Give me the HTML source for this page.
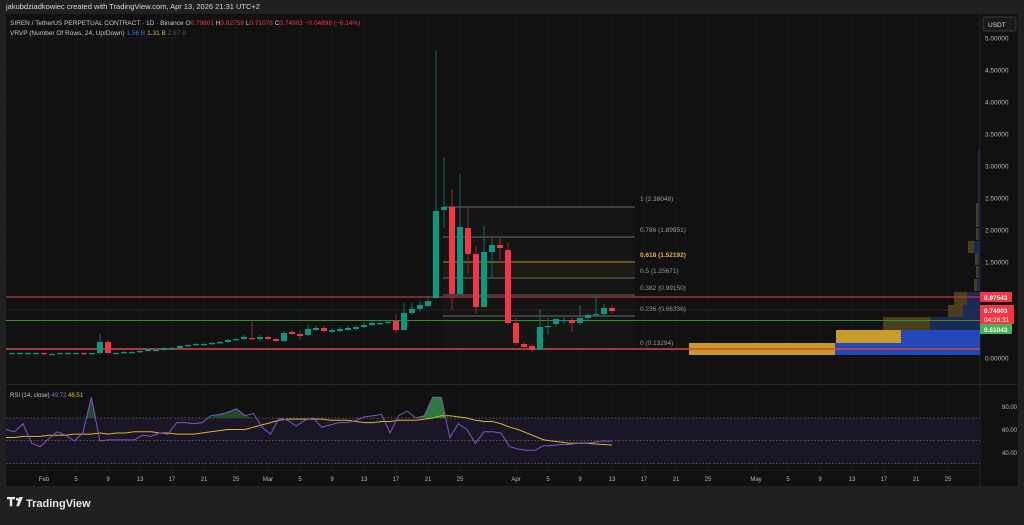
<!DOCTYPE html>
<html><head><meta charset="utf-8">
<style>
body{margin:0;width:1024px;height:520px;background:#202020;overflow:hidden;font-family:"Liberation Sans",sans-serif;}
svg text{font-family:"Liberation Sans",sans-serif;}
</style></head><body>
<svg id="s" width="1024" height="520" xmlns="http://www.w3.org/2000/svg">
<rect x="0" y="0" width="1024" height="520" fill="#202020"/>
<text x="6" y="9" font-size="7.5" fill="#d8d8d8">jakubdziadkowiec created with TradingView.com, Apr 13, 2026 21:31 UTC+2</text>
<rect x="6" y="14" width="1012" height="472" fill="#111111"/>
<line x1="980" y1="14" x2="980" y2="486" stroke="#222" stroke-width="1"/>
<line x1="6" y1="384.5" x2="1018" y2="384.5" stroke="#262626"/>
<line x1="6" y1="470.5" x2="980" y2="470.5" stroke="#1f1f1f"/>
<g id="grid"></g>
<rect x="6" y="418" width="974" height="45.5" fill="#1b1626"/>
<line x1="6" y1="418" x2="980" y2="418" stroke="#555" stroke-dasharray="1.5 2"/>
<line x1="6" y1="440.5" x2="980" y2="440.5" stroke="#555" stroke-dasharray="1.5 2"/>
<line x1="6" y1="463.5" x2="980" y2="463.5" stroke="#555" stroke-dasharray="1.5 2"/>
<rect x="443" y="207" width="192" height="142" fill="#151515"/>
<rect x="443" y="262" width="192" height="16" fill="#1c1a12"/>
<g stroke-width="1">
<line x1="443" y1="207" x2="635" y2="207" stroke="#6a6a6a"/>
<line x1="443" y1="237" x2="635" y2="237" stroke="#6a6a6a"/>
<line x1="443" y1="262" x2="635" y2="262" stroke="#b58f2e"/>
<line x1="443" y1="278" x2="635" y2="278" stroke="#6a6a6a"/>
<line x1="443" y1="295" x2="635" y2="295" stroke="#6a6a6a"/>
<line x1="443" y1="316" x2="635" y2="316" stroke="#6a6a6a"/>
<line x1="443" y1="349" x2="635" y2="349" stroke="#6a6a6a"/>
</g>
<g font-size="6.5" fill="#9a9a9a">
<text x="640" y="201">1 (2.38048)</text>
<text x="640" y="232">0.786 (1.89951)</text>
<text x="640" y="257" fill="#e0b43a" font-weight="bold">0.618 (1.52192)</text>
<text x="640" y="273">0.5 (1.25671)</text>
<text x="640" y="290">0.382 (0.99150)</text>
<text x="640" y="311">0.236 (0.66336)</text>
<text x="640" y="345">0 (0.13294)</text>
</g>
<g>
<rect x="689" y="343" width="146" height="12" fill="#c99a2a"/>
<rect x="835" y="343" width="145" height="12" fill="#2448b8"/>
<rect x="836" y="330" width="65" height="13" fill="#c99a2a"/>
<rect x="901" y="330" width="79" height="13" fill="#2448b8"/>
<rect x="883" y="317" width="47" height="13" fill="#4a3d1a"/>
<rect x="930" y="317" width="50" height="13" fill="#1b2a55"/>
<rect x="948" y="305" width="15" height="12" fill="#4a3d1a"/>
<rect x="963" y="305" width="17" height="12" fill="#1b2a55"/>
<rect x="954" y="292" width="13" height="13" fill="#4a3d1a"/>
<rect x="967" y="292" width="13" height="13" fill="#1b2a55"/>
<rect x="974" y="279" width="3" height="12" fill="#4a3d1a"/><rect x="977" y="279" width="3" height="12" fill="#1b2a55"/>
<rect x="976" y="266" width="2" height="12" fill="#4a3d1a"/><rect x="978" y="266" width="2" height="12" fill="#1b2a55"/>
<rect x="975" y="253" width="3" height="12" fill="#4a3d1a"/><rect x="978" y="253" width="2" height="12" fill="#1b2a55"/>
<rect x="968" y="241" width="6" height="12" fill="#4a3d1a"/><rect x="974" y="241" width="6" height="12" fill="#1b2a55"/>
<rect x="976" y="228" width="2" height="12" fill="#4a3d1a"/><rect x="978" y="228" width="2" height="12" fill="#1b2a55"/>
<rect x="976" y="203" width="2" height="24" fill="#4a3d1a"/><rect x="978" y="203" width="2" height="24" fill="#1b2a55"/>
<rect x="978" y="150" width="1.5" height="52" fill="#1b2a55"/>
</g>
<line x1="6" y1="297" x2="980" y2="297" stroke="#b83a3a" stroke-width="1.2"/>
<line x1="6" y1="310" x2="980" y2="310" stroke="#6a2a2a" stroke-dasharray="1 1.5"/>
<line x1="6" y1="320.5" x2="980" y2="320.5" stroke="#3a8a3a" stroke-width="1"/>
<line x1="6" y1="349" x2="980" y2="349" stroke="#d04a3a" stroke-width="1.5"/>
<g id="candles"></g>
<g id="rsi"></g>
<text x="10" y="25" font-size="6.5" fill="#c8c8c8">SIREN / TetherUS PERPETUAL CONTRACT · 1D · Binance <tspan>O</tspan><tspan fill="#f23645">0.79801</tspan> H<tspan fill="#f23645">0.82758</tspan> L<tspan fill="#f23645">0.71078</tspan> C<tspan fill="#f23645">0.74903 −0.04898 (−6.14%)</tspan></text>
<text x="10" y="35" font-size="6.5" fill="#c8c8c8">VRVP (Number Of Rows, 24, Up/Down) <tspan fill="#3a6ff0">1.56 B</tspan> <tspan fill="#e0b43a">1.31 B</tspan> <tspan fill="#555">2.87 B</tspan></text>
<text x="10" y="397" font-size="6" fill="#c8c8c8">RSI (14, close) <tspan fill="#8a6fd8">49.72</tspan> <tspan fill="#e0c030">46.51</tspan></text>
<rect x="983" y="17" width="33" height="14" rx="2" fill="#1a1a1a" stroke="#3a3a3a"/>
<text x="988" y="27" font-size="6.5" fill="#d8d8d8">USDT</text>
<g font-size="6.5" fill="#b8b8b8" id="pax"></g>
<rect x="980" y="292" width="32" height="10" fill="#f23645"/>
<text x="984" y="300" font-size="6.5" fill="#fff" font-weight="bold">0.97543</text>
<rect x="980" y="305" width="34" height="19" fill="#f23645"/>
<text x="984" y="313" font-size="6.5" fill="#fff" font-weight="bold">0.74903</text>
<text x="984" y="322" font-size="6.5" fill="#fff">04:28:31</text>
<rect x="980" y="324" width="32" height="10" fill="#4caf50"/>
<text x="984" y="332" font-size="6.5" fill="#fff" font-weight="bold">0.61043</text>
<g font-size="6" fill="#b8b8b8">
<text x="1002" y="409">80.00</text><text x="1002" y="432">60.00</text><text x="1002" y="455">40.00</text>
</g>
<g id="tax" font-size="6" fill="#b8b8b8" text-anchor="middle"></g>
<g fill="#e8e8e8">
<path d="M7 497h8v2.2h-2.8v7h-2.4v-7H7z"/>
<circle cx="17.3" cy="499.2" r="1.4"/>
<path d="M19.5 497h3.5l-4 9.2h-2.8z"/>
</g>
<text x="26" y="507" font-size="11" fill="#e8e8e8" font-weight="bold">TradingView</text>
</svg>
<script>
var NS="http://www.w3.org/2000/svg";
function el(p,t,a){var e=document.createElementNS(NS,t);for(var k in a)e.setAttribute(k,a[k]);p.appendChild(e);return e;}
var g=document.getElementById('grid'),c=document.getElementById('candles'),r=document.getElementById('rsi'),pax=document.getElementById('pax'),tax=document.getElementById('tax');
function X(d){return 44+8*d;}
var labels=[[0,'Feb'],[4,'5'],[8,'9'],[12,'13'],[16,'17'],[20,'21'],[24,'25'],[28,'Mar'],[32,'5'],[36,'9'],[40,'13'],[44,'17'],[48,'21'],[52,'25'],[59,'Apr'],[63,'5'],[67,'9'],[71,'13'],[75,'17'],[79,'21'],[83,'25'],[89,'May'],[93,'5'],[97,'9'],[101,'13'],[105,'17'],[109,'21'],[113,'25']];
labels.forEach(function(l){var x=X(l[0]);el(g,'line',{x1:x,y1:14,x2:x,y2:470,stroke:'#181818'});var t=el(tax,'text',{x:x,y:481});t.textContent=l[1];});
for(var i=0;i<=10;i++){var p=i*0.5,y=358-64*p;el(g,'line',{x1:6,y1:y,x2:980,y2:y,stroke:'#181818'});var t=el(pax,'text',{x:985,y:y+2.3});t.textContent=p.toFixed(5);}
var C=[[-4,353,353,352,354],[-3,353,353,352,354],[-2,353,353,352,354],[-1,353,353,352,354],[0,353,354,352,355],[1,354,354,353,355],[2,353,353,352,354],[3,353,353,352,354],[4,353,353,352,354],[5,353,354,352,355],[6,354,353,353,355],[7,353,342,334,355],[8,342,353,340,354],[9,353,353,352,354],[10,353,352,351,354],[11,352,352,351,353],[12,352,351,350,353],[13,351,349,348,352],[14,350,350,349,351],[15,350,348,347,351],[16,348,348,347,349],[17,348,346,345,349],[18,346,345,344,347],[19,345,344,343,346],[20,344,344,343,346],[21,344,343,342,345],[22,343,342,341,344],[23,342,340,339,343],[24,340,339,338,341],[25,339,337,335,340],[26,338,339,321,340],[27,339,337,335,341],[28,337,339,336,340],[29,339,341,338,342],[30,341,333,331,342],[31,332,334,330,335],[32,334,336,330,340],[33,335,329,324,336],[34,330,328,326,331],[35,328,331,326,333],[36,332,330,328,333],[37,331,329,327,332],[38,330,328,326,331],[39,329,327,325,331],[40,327,325,322,328],[41,325,323,321,326],[42,323,323,321,325],[43,322,322,320,323],[44,321,330,314,333],[45,330,313,303,330],[46,313,309,303,315],[47,309,305,301,312],[48,306,301,296,307],[49,298,211,50,299],[50,210,207,157,228],[51,207,294,189,310],[52,294,227,174,294],[53,228,254,207,274],[54,254,307,246,313],[55,307,252,226,307],[56,252,245,238,278],[57,245,248,238,260],[58,250,323,243,325],[59,323,343,318,345],[60,344,347,342,349],[61,346,350,345,352],[62,350,327,309,350],[63,326,326,318,335],[64,324,319,318,327],[65,320,320,316,324],[66,320,323,318,332],[67,323,318,305,325],[68,318,315,313,320],[69,315,314,297,317],[70,314,308,304,316],[71,308,311,305,313]];
C.forEach(function(d){var x=X(d[0]);var up=d[2]<=d[1];var col=up?'#089981':'#f23645';
el(c,'line',{x1:x,y1:d[3],x2:x,y2:d[4],stroke:up?'#0a6b5c':'#8a2a33','stroke-width':1});
var top=Math.min(d[1],d[2]),h=Math.max(1.2,Math.abs(d[2]-d[1]));el(c,'rect',{x:x-3,y:top,width:6,height:h,fill:col});});
var R=[60,58,65,48,45,52,58,55,50,57,88,50,51,51,51,51,55,54,57,56,66,66,65,66,72,73,75,78,72,74,62,56,70,68,63,68,70,62,64,66,66,68,71,72,73,57,72,76,70,72,88,88,53,65,60,48,58,58,57,45,43,42,42,46,46,47,47,48,48,49,50,49.7];
var S=[53,53,54,54,54,55,55,55,56,56,56,57,56,57,57,58,58,58,57,57,56,56,56,57,58,59,60,60,60,62,64,66,68,69,69,69,69,69,68,68,68,67,66,66,67,67,68,68,68,69,70,72,72,71,70,68,67,67,65,62,60,57,54,51,50,49,48,48,48,47.5,47,46.5];
function RY(v){return 418-(v-70)*1.15;}
var st=606/71;
function RX(i){return 6+i*st;}
var pts=R.map(function(v,i){return RX(i)+','+RY(v);}).join(' ');
var sp=S.map(function(v,i){return RX(i)+','+RY(v);}).join(' ');
el(r,'polygon',{points:RX(9.4)+',418 '+RX(10)+','+RY(88)+' '+RX(10.6)+',418',fill:'#1f4d2a'});
el(r,'polygon',{points:RX(23.6)+',418 '+RX(26)+','+RY(75)+' '+RX(27)+','+RY(78)+' '+RX(28)+','+RY(72)+' '+RX(29)+',418',fill:'#1f4d2a'});
el(r,'polygon',{points:RX(48)+',418 '+RX(49)+','+RY(72)+' '+RX(50)+','+RY(88)+' '+RX(51)+','+RY(88)+' '+RX(51.5)+',418',fill:'#2a7a3a'});
el(r,'polyline',{points:sp,fill:'none',stroke:'#d9b42a','stroke-width':1});
el(r,'polyline',{points:pts,fill:'none',stroke:'#7e57c2','stroke-width':1});
</script>
</body></html>
